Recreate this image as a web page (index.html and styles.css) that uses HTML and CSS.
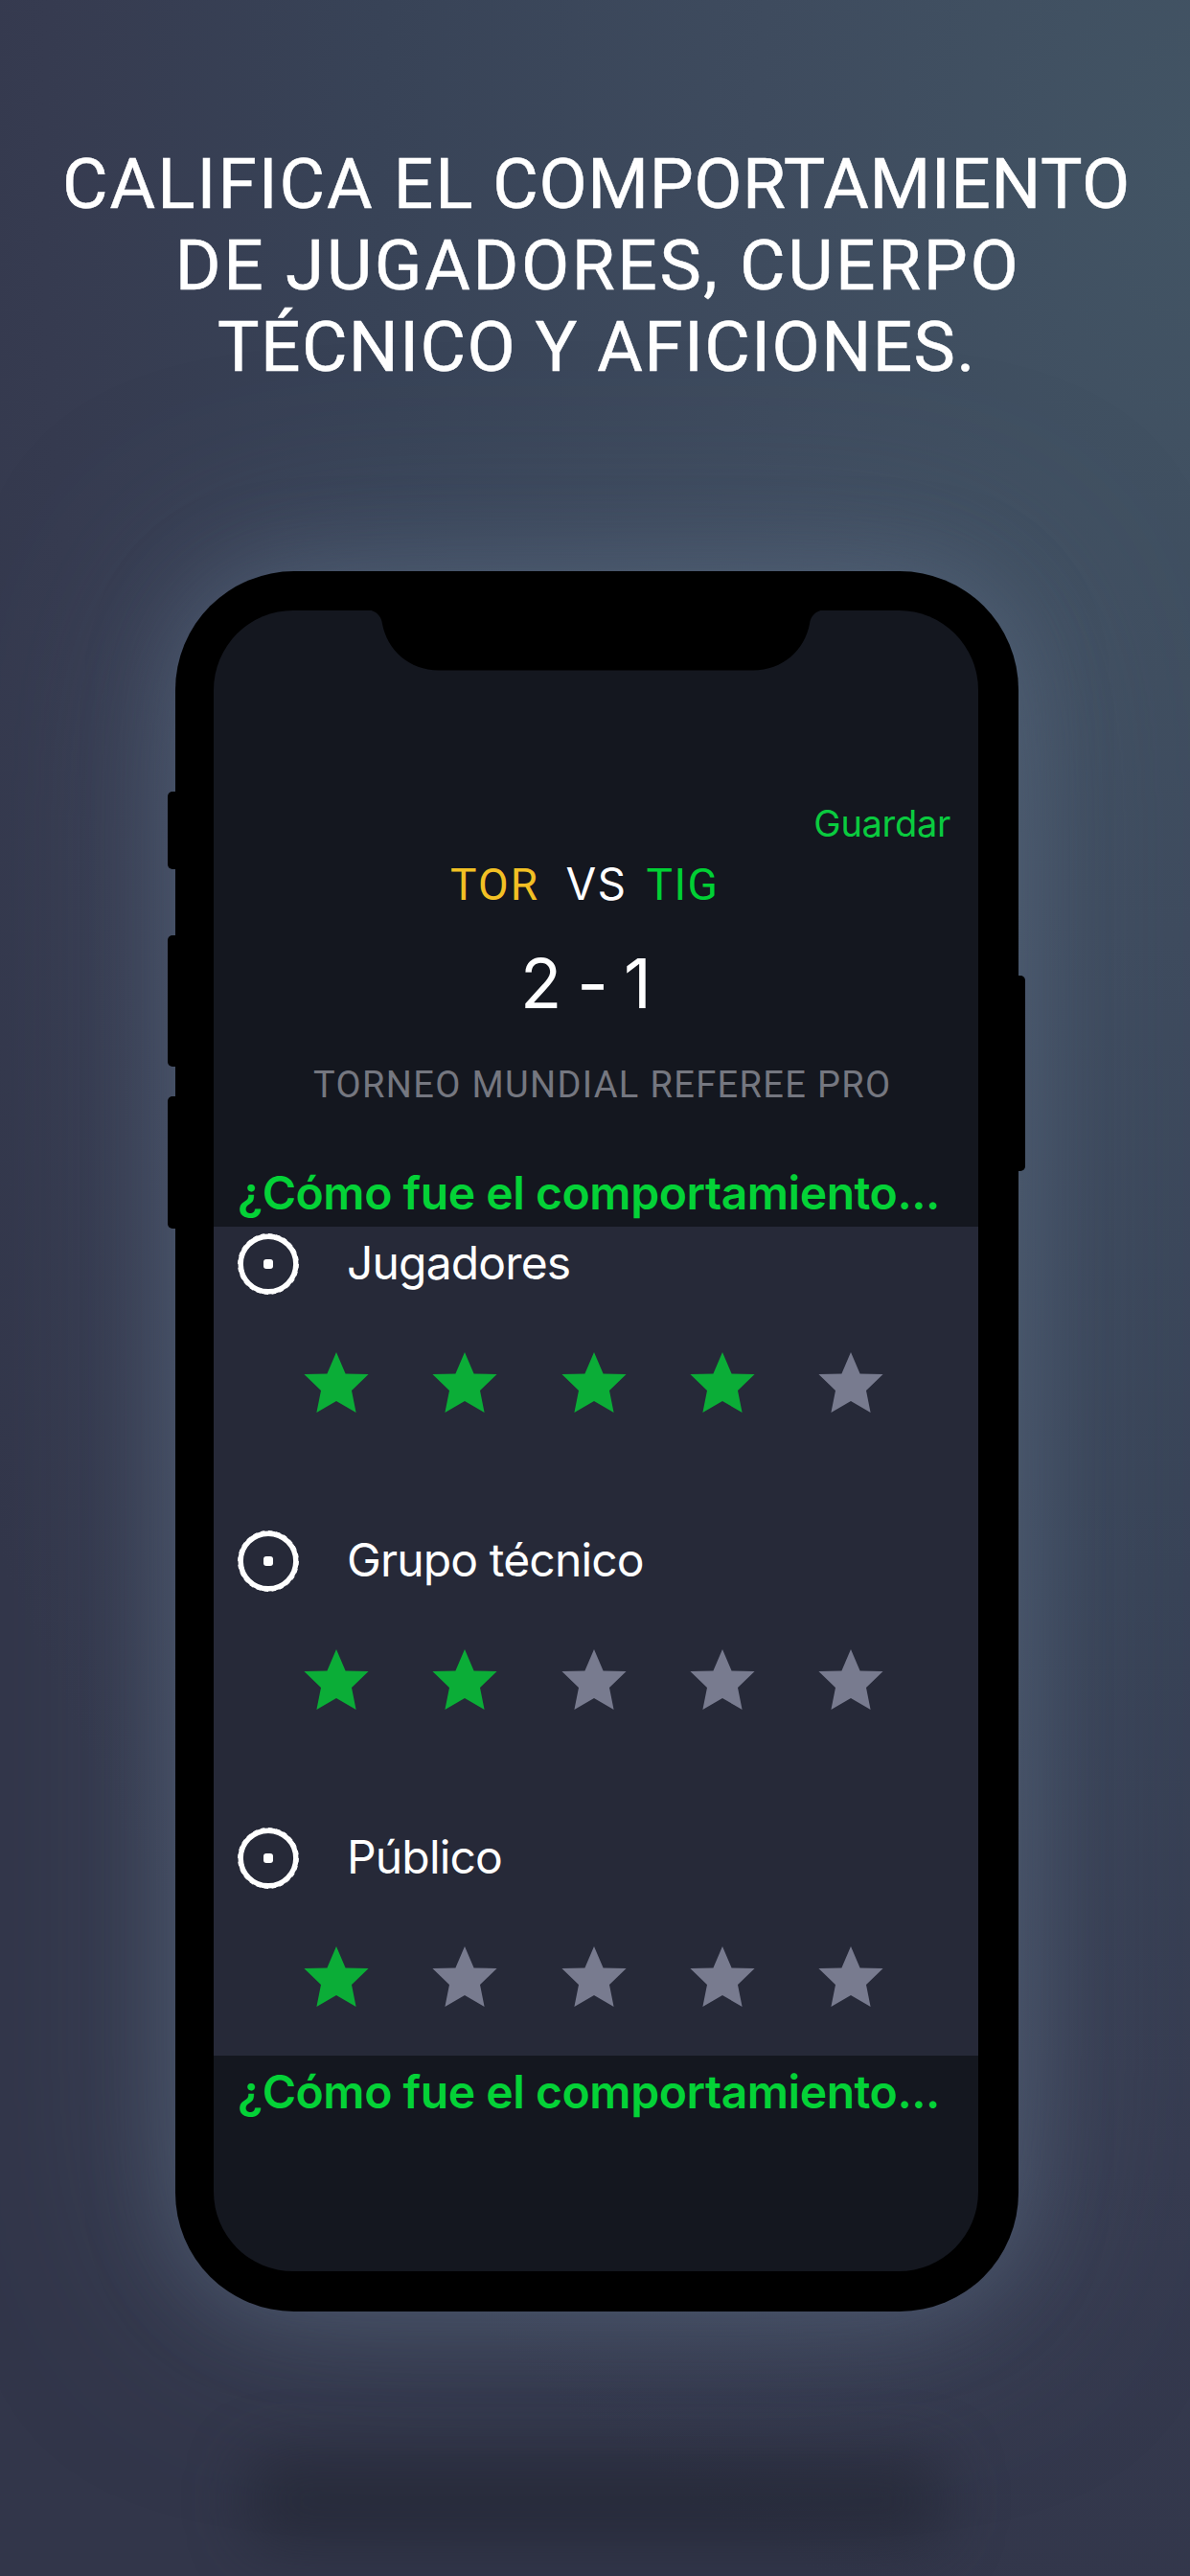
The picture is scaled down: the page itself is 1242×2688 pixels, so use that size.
FILE: index.html
```html
<!DOCTYPE html>
<html lang="es">
<head>
<meta charset="utf-8">
<title>Califica el comportamiento</title>
<link rel="stylesheet" href="styles.css">
</head>
<body>
<svg class="symbols" width="0" height="0" aria-hidden="true">
  <symbol id="star" viewBox="0 0 68 63">
    <path d="M34 0 43.6 22.6 67.6 23 50 40 54.6 63 34 51 13.4 63 18 40 .4 23 24.4 22.6Z"/>
  </symbol>
  <symbol id="target" viewBox="0 0 66 66">
    <circle cx="33" cy="33" r="28.8" fill="none" stroke="#fff" stroke-width="5.4"/>
    <circle cx="33" cy="33" r="31" fill="none" stroke="#fff" stroke-width="1.8" stroke-dasharray="4.5 3.6"/>
    <rect x="28" y="28" width="10" height="10" rx="3" fill="#fff"/>
  </symbol>
</svg>
<main class="poster">
  <h1 class="headline">
    <span class="line line-1"><span class="wide">CALIFICA EL</span> COMPORTAMIENTO</span>
    <span class="line line-2">DE JUGADORES, CUERPO</span>
    <span class="line line-3">TÉCNICO Y AFICIONES.</span>
  </h1>

  <div class="phone">
    <i class="key key-mute"></i>
    <i class="key key-up"></i>
    <i class="key key-down"></i>
    <i class="key key-power"></i>
    <div class="screen">
      <svg class="notch" viewBox="0 0 798 64" aria-hidden="true">
        <path d="M158 0C168 0 175 6 176 15C181 42 204 63.5 235 63.5H563C594 63.5 617 42 622 15C623 6 630 0 640 0Z"/>
      </svg>
      <header class="match">
        <div class="save">Guardar</div>
        <div class="teams">
          <span class="team home">TOR</span>
          <span class="versus">VS</span>
          <span class="team away">TIG</span>
        </div>
        <div class="score"><span>2</span><span>-</span><span>1</span></div>
        <div class="league">TORNEO MUNDIAL REFEREE PRO</div>
        <h2 class="question">¿Cómo fue el comportamiento...</h2>
      </header>

      <section class="ratings">
        <div class="rating">
          <div class="label"><svg class="target"><use href="#target"/></svg><span>Jugadores</span></div>
          <div class="stars">
            <svg class="star on"><use href="#star"/></svg>
            <svg class="star on"><use href="#star"/></svg>
            <svg class="star on"><use href="#star"/></svg>
            <svg class="star on"><use href="#star"/></svg>
            <svg class="star"><use href="#star"/></svg>
          </div>
        </div>
        <div class="rating">
          <div class="label"><svg class="target"><use href="#target"/></svg><span>Grupo técnico</span></div>
          <div class="stars">
            <svg class="star on"><use href="#star"/></svg>
            <svg class="star on"><use href="#star"/></svg>
            <svg class="star"><use href="#star"/></svg>
            <svg class="star"><use href="#star"/></svg>
            <svg class="star"><use href="#star"/></svg>
          </div>
        </div>
        <div class="rating">
          <div class="label"><svg class="target"><use href="#target"/></svg><span>Público</span></div>
          <div class="stars">
            <svg class="star on"><use href="#star"/></svg>
            <svg class="star"><use href="#star"/></svg>
            <svg class="star"><use href="#star"/></svg>
            <svg class="star"><use href="#star"/></svg>
            <svg class="star"><use href="#star"/></svg>
          </div>
        </div>
      </section>
      <h2 class="question next">¿Cómo fue el comportamiento...</h2>
    </div>
  </div>
  <div class="floor-shadow"></div>
</main>
</body>
</html>
```
FILE: styles.css
```css
* { box-sizing: border-box; }

body { margin: 0; }

.symbols { display: none; }

.poster {
  width: 1242px;
  height: 2688px;
  padding-top: 150px;
  overflow: hidden;
  display: flex;
  flex-direction: column;
  background: radial-gradient(ellipse 1300px 2250px at 100% 7%, #425464 0%, #3e4b5e 35%, #384357 65%, #363b50 92%, #32364a 115%);
}

.headline {
  margin: 0;
  height: 255px;
  font: 400 73px/85px Roboto, sans-serif;
  color: #fff;
  text-align: center;
  -webkit-text-stroke: .5px #fff;
}

.line { display: block; white-space: nowrap; }
.line-1 { padding-left: 3px; letter-spacing: .6px; }
.wide { letter-spacing: 2px; }
.line-2 { letter-spacing: 2.6px; padding-left: 6px; }
.line-3 { letter-spacing: 1.4px; padding-left: 4px; }

.phone {
  position: relative;
  flex: none;
  width: 880px;
  height: 1816px;
  margin: 191px 0 0 183px;
  padding: 41px 42px 42px 40px;
  border-radius: 124px;
  background: #000;
  box-shadow: 0 0 90px rgba(94, 110, 132, .45), 0 0 200px rgba(94, 110, 132, .5);
}

/* Side keys protrude from the body. */
.key { position: absolute; width: 16px; background: #000; border-radius: 5px; }
.key-mute { left: -8px; top: 230px; height: 81px; }
.key-up { left: -8px; top: 380px; height: 137px; }
.key-down { left: -8px; top: 548px; height: 138px; }
.key-power { right: -7px; top: 422px; height: 204px; }

.screen {
  position: relative;
  height: 1733px;
  overflow: hidden;
  border-radius: 83px;
  background: #14171f;
  font-family: Inter, sans-serif;
}

.notch { position: absolute; left: 0; top: -1px; width: 798px; height: 64px; }

.match {
  height: 643px;
  padding-top: 199px;
  display: flex;
  flex-direction: column;
}

.save {
  padding-right: 29px;
  font-size: 38px;
  line-height: 46px;
  letter-spacing: -.3px;
  text-align: right;
  color: #0acb3f;
}

.teams {
  display: flex;
  align-items: baseline;
  margin-top: 12px;
  padding-left: 247px;
  font-size: 46px;
  line-height: 56px;
}

.team { font-family: Roboto, sans-serif; }
.home { letter-spacing: 2.2px; color: #f2c024; }
.versus { margin-left: 27px; letter-spacing: 1.4px; color: #fff; }
.away { margin-left: 20px; letter-spacing: 1.5px; color: #00d034; }

.score {
  display: flex;
  gap: 16px;
  margin-top: 32px;
  padding-left: 320px;
  font-size: 71px;
  line-height: 86px;
  color: #fff;
}

.league {
  margin-top: 40px;
  padding-left: 104px;
  font: 400 38px/46px Roboto, sans-serif;
  letter-spacing: 1.35px;
  color: #757780;
}

.question {
  margin: 61px 0 0;
  padding-left: 25px;
  font-size: 48px;
  font-weight: 600;
  line-height: 58px;
  letter-spacing: -.44px;
  white-space: nowrap;
  color: #04d237;
}

.question.next { margin-top: 9px; }

.ratings { height: 865px; padding-top: 6px; background: #262938; }

.rating { height: 310px; }

.label {
  display: flex;
  gap: 49px;
  padding-left: 24px;
  height: 66px;
  font-size: 48px;
  line-height: 63px;
  letter-spacing: -.85px;
  color: #fff;
}

.target { flex: none; width: 66px; height: 66px; }

.stars {
  display: flex;
  gap: 66.3px;
  padding: 58.5px 0 0 94px;
}

.star { width: 68px; height: 63px; fill: #787b8f; }
.star.on { fill: #0bad37; }

.floor-shadow {
  flex: none;
  width: 728px;
  height: 96px;
  margin: 149px 0 0 258px;
  border-radius: 30px;
  background: rgba(33, 37, 50, .6);
  filter: blur(30px);
}
```
